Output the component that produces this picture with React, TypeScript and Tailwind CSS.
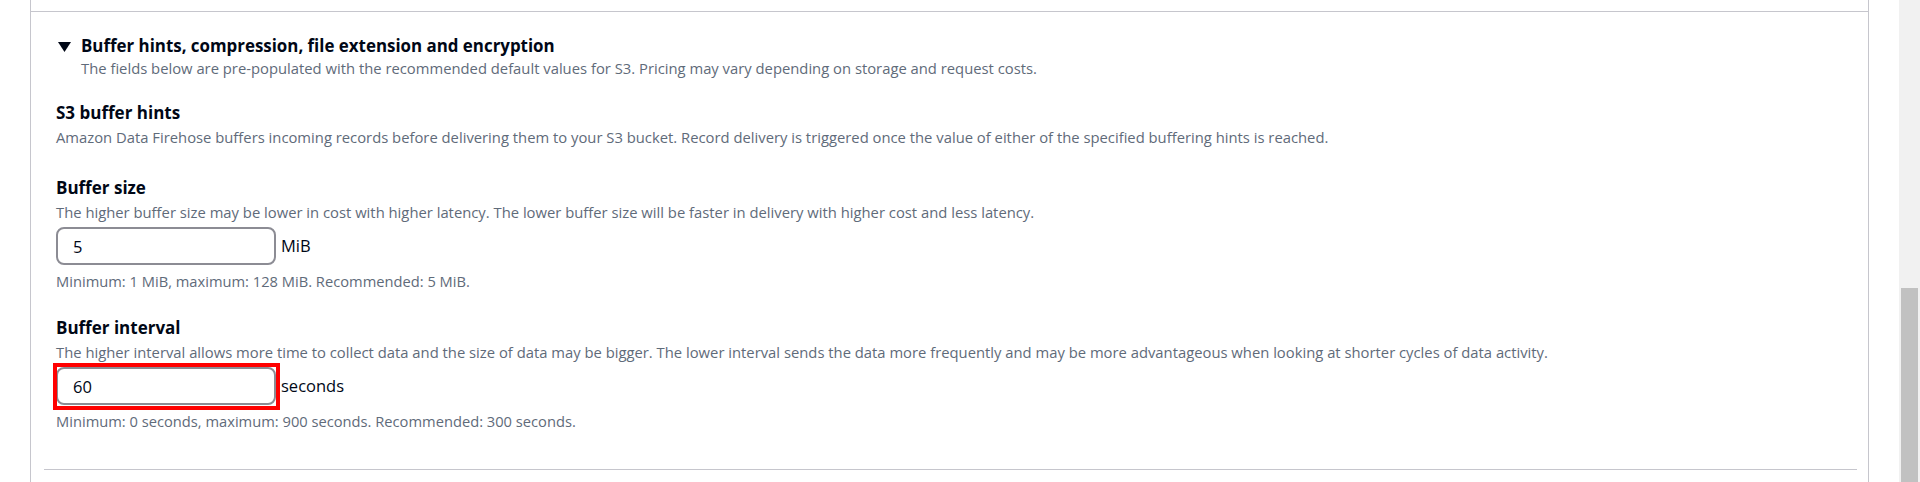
import React from "react";

const font = { fontFamily: '"Open Sans", "Liberation Sans", sans-serif' };

function Field({
  label,
  description,
  value,
  unit,
  hint,
  highlighted = false,
}: {
  label: string;
  description: string;
  value: string;
  unit: string;
  hint: string;
  highlighted?: boolean;
}) {
  return (
    <div className="flex flex-col">
      <div className="h-5 text-[17px] leading-5 font-bold text-[#000716]">{label}</div>
      <div className="mt-[5px] h-[18px] text-[14.8px] leading-[18px] text-[#5f6b7a]">{description}</div>
      <div className="mt-[6px] flex items-center">
        <div className="relative">
          <input
            readOnly
            value={value}
            className="block h-[38px] w-[220px] rounded-[8px] border-2 border-[#8c8c94] bg-white pl-[15px] text-[16.5px] text-[#000716] outline-none"
          />
          {highlighted && (
            <div className="pointer-events-none absolute -left-[3px] -right-[4px] -top-[4px] -bottom-[5px] border-4 border-[#ff0000]" />
          )}
        </div>
        <span className="ml-[5px] text-[16.5px] text-[#000716]">{unit}</span>
      </div>
      <div className="mt-[7px] h-[18px] text-[14.7px] leading-[18px] text-[#5f6b7a]">{hint}</div>
    </div>
  );
}

export default function App() {
  return (
    <div className="flex h-[482px] w-full overflow-hidden bg-white" style={font}>
      <div className="w-[30px] shrink-0" />
      <div className="flex w-[1839px] shrink-0 flex-col border-x border-[#c6c6cd]">
        <div className="h-[12px] shrink-0 border-b border-[#c6c6cd]" />

        <div className="flex flex-col pl-[25px]">
          {/* expandable section header */}
          <div className="mt-[24px] flex h-5 items-center">
            <svg className="ml-[2px] mr-[10px] mt-px" width="13" height="10" viewBox="0 0 13 10">
              <polygon points="0,0 13,0 6.5,10" fill="#000716" />
            </svg>
            <span className="text-[16.9px] leading-5 font-bold text-[#000716]">
              Buffer hints, compression, file extension and encryption
            </span>
          </div>
          <div className="mt-[3px] h-[18px] pl-[25px] text-[14.8px] leading-[18px] text-[#5f6b7a]">
            The fields below are pre-populated with the recommended default values for S3. Pricing may vary
            depending on storage and request costs.
          </div>

          <div className="mt-[26px] h-5 text-[17px] leading-5 font-bold text-[#000716]">S3 buffer hints</div>
          <div className="mt-[5px] h-[18px] text-[14.8px] leading-[18px] text-[#5f6b7a]">
            Amazon Data Firehose buffers incoming records before delivering them to your S3 bucket. Record delivery
            is triggered once the value of either of the specified buffering hints is reached.
          </div>

          <div className="mt-[32px]">
            <Field
              label="Buffer size"
              description="The higher buffer size may be lower in cost with higher latency. The lower buffer size will be faster in delivery with higher cost and less latency."
              value="5"
              unit="MiB"
              hint="Minimum: 1 MiB, maximum: 128 MiB. Recommended: 5 MiB."
            />
          </div>

          <div className="mt-[28px]">
            <Field
              label="Buffer interval"
              description="The higher interval allows more time to collect data and the size of data may be bigger. The lower interval sends the data more frequently and may be more advantageous when looking at shorter cycles of data activity."
              value="60"
              unit="seconds"
              hint="Minimum: 0 seconds, maximum: 900 seconds. Recommended: 300 seconds."
              highlighted
            />
          </div>
        </div>

        <div className="mt-auto mb-[12px] ml-[13px] mr-[11px] border-b border-[#c6c6cd]" />
      </div>
      <div className="w-[30px] shrink-0" />
      <div className="relative flex-1 bg-[#f1f1f1]">
        <div className="absolute left-[2px] right-[2px] top-[288px] bottom-0 bg-[#c1c1c1]" />
      </div>
    </div>
  );
}
